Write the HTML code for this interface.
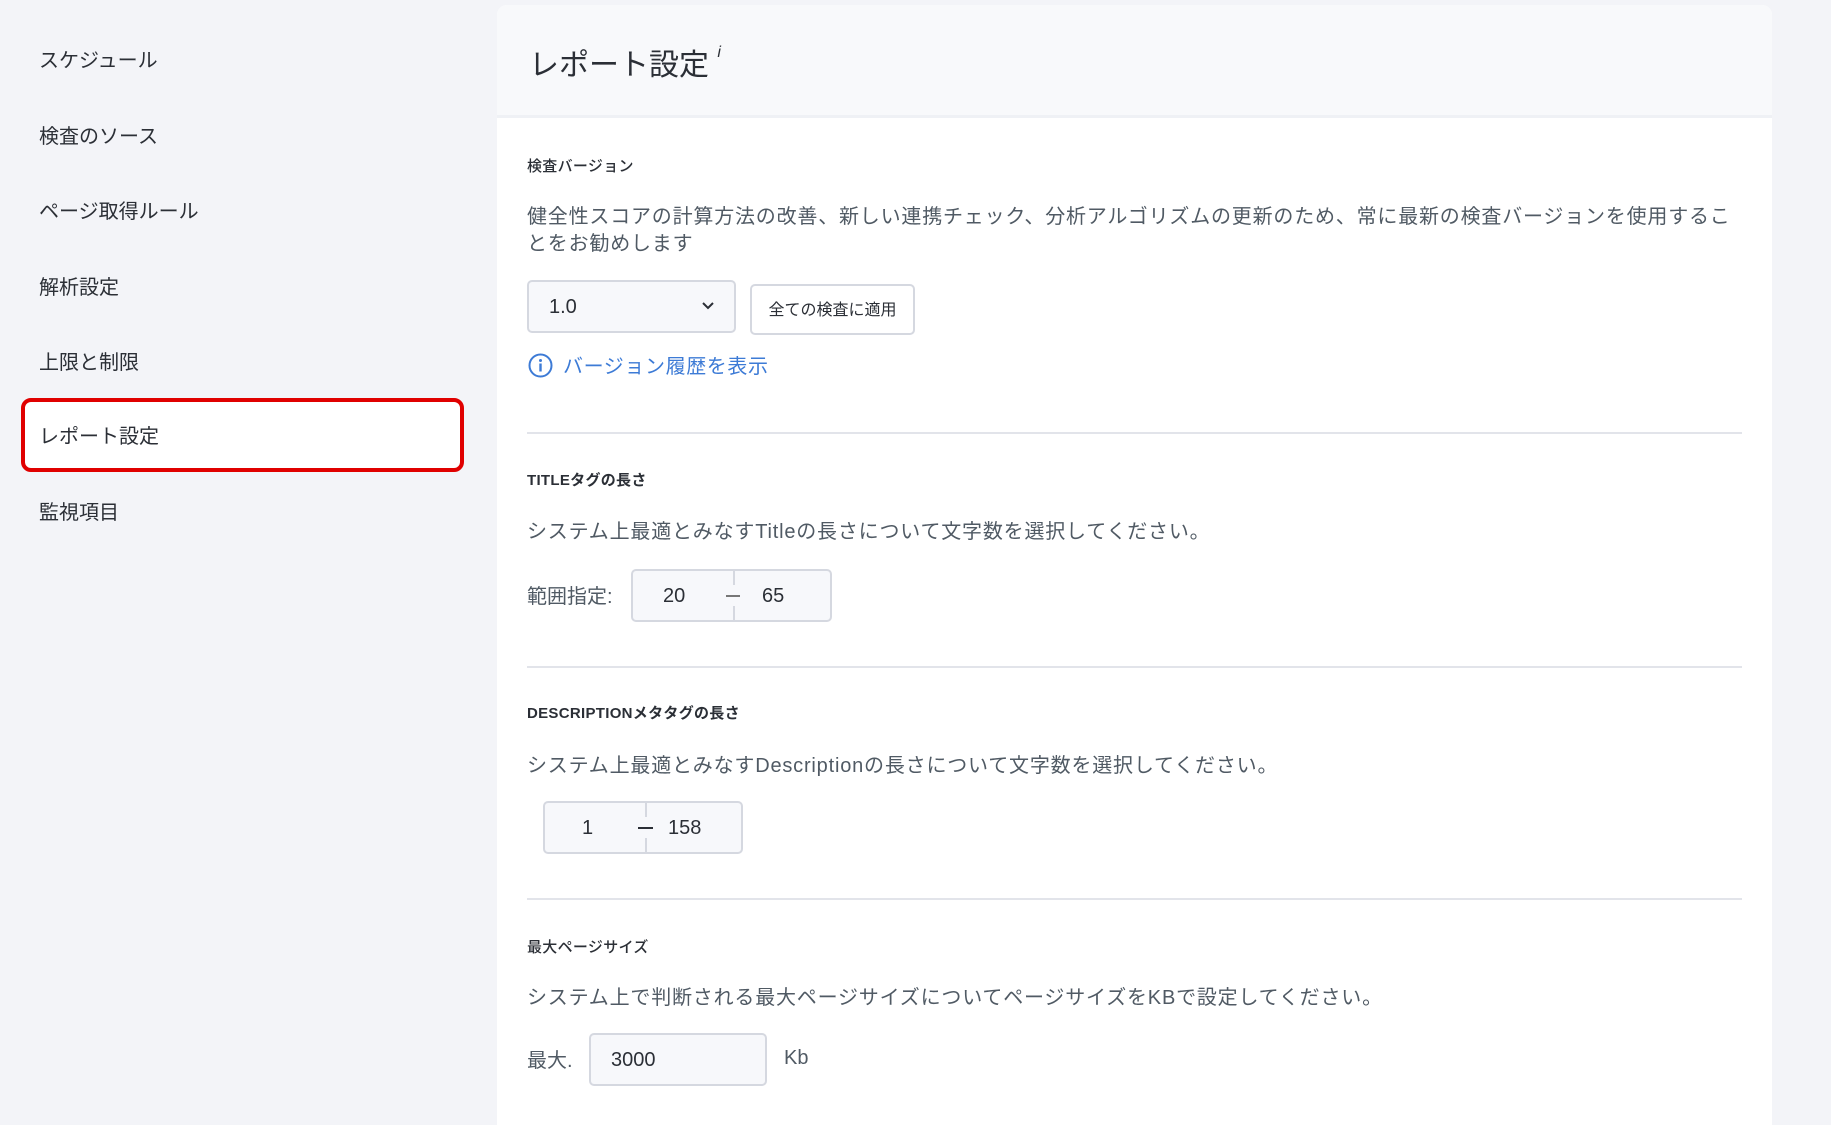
<!DOCTYPE html>
<html><head><meta charset="utf-8"><style>
*{box-sizing:border-box;margin:0;padding:0}
body{width:1831px;height:1117px;overflow:hidden;background:#f3f4f8;font-family:"Liberation Sans","Noto Sans CJK JP",sans-serif;color:#2b2f36;position:relative}
.nav{position:absolute;left:39px;font-size:20px;color:#2b2f36;line-height:24px}
.red{position:absolute;left:21px;top:398px;width:443px;height:74px;border:4px solid #e00000;border-radius:10px;background:#fff}
.panel{position:absolute;left:497px;top:5px;width:1275px;height:1120px;background:#fff;border-radius:10px 10px 0 0;overflow:hidden}
.head{height:113px;background:#f8f9fb;border-bottom:3px solid #eff1f5}
.abs{position:absolute}
.lbl{position:absolute;left:30px;font-size:15px;color:#2b2f36;font-weight:600;letter-spacing:.3px}
.desc{position:absolute;left:30px;font-size:20px;color:#505a64;letter-spacing:.8px;line-height:27px}
.hr{position:absolute;left:30px;width:1215px;height:2px;background:#e2e4ea}
.box{position:absolute;border:2px solid #d5d8e0;border-radius:5px;background:#f7f8fb;font-size:20px;color:#2b2f36}
</style></head><body>
<div class="nav" style="top:49px">スケジュール</div>
<div class="nav" style="top:125px">検査のソース</div>
<div class="nav" style="top:200px">ページ取得ルール</div>
<div class="nav" style="top:276px">解析設定</div>
<div class="nav" style="top:351px">上限と制限</div>
<div class="red"></div>
<div class="nav" style="top:425px">レポート設定</div>
<div class="nav" style="top:501px">監視項目</div>

<div class="panel">
<div class="head"></div>
<div class="abs" style="left:32px;top:35px;font-size:30px;color:#2b2f36">レポート設定 <span style="font-size:16px;font-style:italic;vertical-align:top;position:relative;top:4px">i</span></div>

<div class="lbl" style="top:150px;font-weight:500">検査バージョン</div>
<div class="desc" style="top:199px">健全性スコアの計算方法の改善、新しい連携チェック、分析アルゴリズムの更新のため、常に最新の検査バージョンを使用するこ<br>とをお勧めします</div>
<div class="box" style="left:30px;top:275px;width:209px;height:53px;padding:14px 20px">1.0
<svg class="abs" style="right:20px;top:20px" width="12" height="8" viewBox="0 0 12 8"><path d="M1 1l5 5 5-5" stroke="#2b2f36" stroke-width="2" fill="none"/></svg></div>
<div class="box" style="left:253px;top:279px;width:165px;height:51px;background:#fff;font-size:16px;padding:10px 0;text-align:center">全ての検査に適用</div>
<svg class="abs" style="left:31px;top:348px" width="25" height="25" viewBox="0 0 25 25"><circle cx="12.5" cy="12.5" r="11" stroke="#3d7bd6" stroke-width="2" fill="none"/><circle cx="12.5" cy="7.5" r="1.5" fill="#3d7bd6"/><rect x="11.3" y="10.5" width="2.4" height="8" fill="#3d7bd6"/></svg>
<div class="abs" style="left:66px;top:345px;font-size:20px;color:#3d7bd6;letter-spacing:.6px">バージョン履歴を表示</div>

<div class="hr" style="top:427px"></div>
<div class="lbl" style="top:464px">TITLEタグの長さ</div>
<div class="desc" style="top:514px">システム上最適とみなすTitleの長さについて文字数を選択してください。</div>
<div class="abs" style="left:30px;top:575px;font-size:20px;color:#505a64">範囲指定:</div>
<div class="box" style="left:134px;top:564px;width:201px;height:53px">
<span class="abs" style="left:30px;top:14px">20</span>
<div class="abs" style="left:100px;top:0;width:2px;height:14px;background:#d5d8e0"></div>
<div class="abs" style="left:100px;bottom:0;width:2px;height:14px;background:#d5d8e0"></div>
<div class="abs" style="left:93px;top:24px;width:14px;height:1.5px;background:#777"></div>
<span class="abs" style="left:129px;top:14px">65</span></div>

<div class="hr" style="top:661px"></div>
<div class="lbl" style="top:697px">DESCRIPTIONメタタグの長さ</div>
<div class="desc" style="top:748px">システム上最適とみなすDescriptionの長さについて文字数を選択してください。</div>
<div class="box" style="left:46px;top:796px;width:200px;height:53px">
<span class="abs" style="left:37px;top:14px">1</span>
<div class="abs" style="left:100px;top:0;width:2px;height:14px;background:#d5d8e0"></div>
<div class="abs" style="left:100px;bottom:0;width:2px;height:14px;background:#d5d8e0"></div>
<div class="abs" style="left:93px;top:24px;width:15px;height:2px;background:#2b2f36"></div>
<span class="abs" style="left:123px;top:14px">158</span></div>

<div class="hr" style="top:893px"></div>
<div class="lbl" style="top:931px;font-weight:500">最大ページサイズ</div>
<div class="desc" style="top:980px">システム上で判断される最大ページサイズについてページサイズをKBで設定してください。</div>
<div class="abs" style="left:30px;top:1039px;font-size:20px;color:#505a64">最大.</div>
<div class="box" style="left:92px;top:1028px;width:178px;height:53px;padding:14px 20px">3000</div>
<div class="abs" style="left:287px;top:1042px;font-size:20px;color:#505a64">Kb</div>
</div>
</body></html>
